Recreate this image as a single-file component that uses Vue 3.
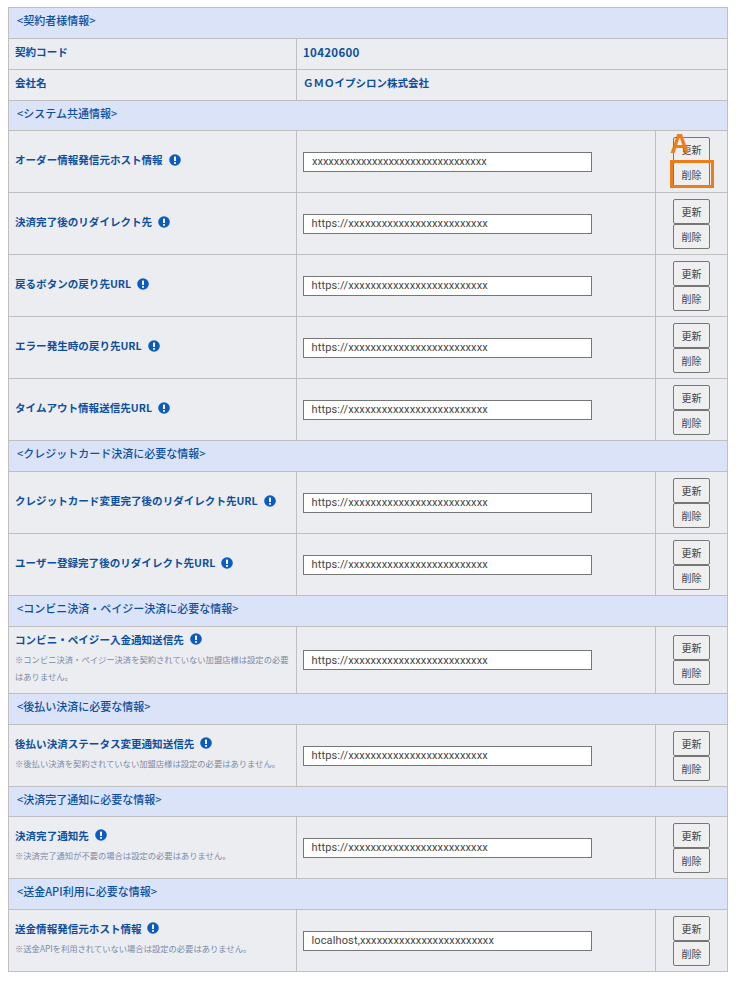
<script setup>
const url = 'https://xxxxxxxxxxxxxxxxxxxxxxxxx'
const sections = [
  { title: '<契約者様情報>', h: 31, rows: [
    { label: '契約コード', value: '10420600', h: 31 },
    { label: '会社名', value: 'ＧＭＯイプシロン株式会社', wide: true, h: 31 },
  ] },
  { title: '<システム共通情報>', h: 30, rows: [
    { label: 'オーダー情報発信元ホスト情報', input: 'xxxxxxxxxxxxxxxxxxxxxxxxxxxxxxxx', mark: true },
    { label: '決済完了後のリダイレクト先', input: url },
    { label: '戻るボタンの戻り先URL', input: url },
    { label: 'エラー発生時の戻り先URL', input: url },
    { label: 'タイムアウト情報送信先URL', input: url },
  ] },
  { title: '<クレジットカード決済に必要な情報>', h: 31, rows: [
    { label: 'クレジットカード変更完了後のリダイレクト先URL', input: url },
    { label: 'ユーザー登録完了後のリダイレクト先URL', input: url },
  ] },
  { title: '<コンビニ決済・ペイジー決済に必要な情報>', h: 31, rows: [
    { label: 'コンビニ・ペイジー入金通知送信先', input: url, h: 67, note: '※コンビニ決済・ペイジー決済を契約されていない加盟店様は設定の必要はありません。' },
  ] },
  { title: '<後払い決済に必要な情報>', h: 31, rows: [
    { label: '後払い決済ステータス変更通知送信先', input: url, note: '※後払い決済を契約されていない加盟店様は設定の必要はありません。' },
  ] },
  { title: '<決済完了通知に必要な情報>', h: 30, rows: [
    { label: '決済完了通知先', input: url, note: '※決済完了通知が不要の場合は設定の必要はありません。' },
  ] },
  { title: '<送金API利用に必要な情報>', h: 31, rows: [
    { label: '送金情報発信元ホスト情報', input: 'localhost,xxxxxxxxxxxxxxxxxxxxxxxx', note: '※送金APIを利用されていない場合は設定の必要はありません。' },
  ] },
]
</script>

<template>
  <div class="page">
    <table class="table">
      <colgroup>
        <col class="c1" />
        <col class="c2" />
        <col class="c3" />
      </colgroup>
      <tbody v-for="s in sections" :key="s.title">
        <tr :style="{ height: s.h + 'px' }">
          <th class="section" colspan="3">{{ s.title }}</th>
        </tr>
        <tr v-for="r in s.rows" :key="r.label" :class="{ short: !r.input }" :style="{ height: (r.h || 62) + 'px' }">
          <td class="label-cell">
            <div class="label">
              {{ r.label }}
              <svg v-if="r.input" class="info" viewBox="0 0 12 12" aria-hidden="true">
                <circle cx="6" cy="6" r="5.8" fill="#0b5cc0" />
                <rect x="5" y="2.4" width="2" height="4.6" rx="0.6" fill="#fff" />
                <rect x="5" y="7.9" width="2" height="1.8" rx="0.5" fill="#fff" />
              </svg>
            </div>
            <p v-if="r.note" class="note">{{ r.note }}</p>
          </td>
          <td v-if="!r.input" class="value-cell" colspan="2">
            <span class="value" :class="{ wide: r.wide }">{{ r.value }}</span>
          </td>
          <td v-if="r.input" class="value-cell">
            <input class="field" :class="{ spaced: !r.mark }" type="text" :value="r.input" />
          </td>
          <td v-if="r.input" class="btn-cell">
            <div class="btns">
              <button class="btn" type="button">更新</button>
              <button class="btn" type="button">削除</button>
              <template v-if="r.mark">
                <span class="mark-box"></span>
                <span class="mark-letter">A</span>
              </template>
            </div>
          </td>
        </tr>
      </tbody>
    </table>
  </div>
</template>

<style>
html, body { margin: 0; background: #fff; }
</style>

<style scoped>
.page {
  padding: 7px 0 10px 8px;
  width: 735px;
  box-sizing: border-box;
  font-family: "Noto Sans CJK JP", "Noto Sans", sans-serif;
}
.table {
  width: 719px;
  table-layout: fixed;
  border-collapse: collapse;
  border: 1px solid #bfbfbf;
}
.c1 { width: 288px; }
.c2 { width: 359px; }
.c3 { width: 72px; }
.section {
  background: #dae3f7;
  border: 1px solid #bfbfbf;
  padding: 0 0 6px 8px;
  text-align: left;
  font-weight: 500;
  font-size: 11px;
  line-height: 18px;
  color: #0d4f9e;
}
td {
  background: #ecedf1;
  border: 1px solid #bfbfbf;
  padding: 0;
}
.label-cell { padding: 0 6px; vertical-align: middle; }
.label {
  font-size: 10.55px;
  font-weight: 700;
  line-height: 16px;
  color: #0d4f9e;
  margin-bottom: 3px;
  white-space: nowrap;
}
.short .label { margin-bottom: 5px; }
.info {
  width: 12px;
  height: 12px;
  margin-left: 3.5px;
  vertical-align: -1.5px;
}
.note {
  margin: 0 0 4px;
  font-size: 8.3px;
  line-height: 17px;
  color: #7b8aa8;
}
.value-cell { padding: 0 6px; }
.value {
  font-size: 11.5px;
  letter-spacing: 0.3px;
  font-weight: 700;
  color: #0d4f9e;
  display: block;
  margin-bottom: 5px;
}
.value.wide { font-size: 10.5px; letter-spacing: 0; }
.field {
  display: block;
  box-sizing: border-box;
  width: 289px;
  height: 20px;
  border: 1px solid #767676;
  background: #fff;
  padding: 0 8px;
  margin: 0;
  font-family: Roboto, "Noto Sans", sans-serif;
  font-size: 11px;
  color: #444;
  outline: none;
}
.field.spaced { letter-spacing: 0.13px; padding-left: 7.5px; }
.btn-cell { padding: 0 0 0 17px; }
.btns {
  position: relative;
  width: 37px;
  display: flex;
  flex-direction: column;
}
.btn {
  box-sizing: border-box;
  width: 37px;
  height: 25px;
  padding: 0;
  margin: 0;
  border: 1px solid #767676;
  border-radius: 2px;
  background: #efefef;
  font-family: "Noto Sans CJK JP", sans-serif;
  font-size: 10px;
  color: #444;
}
.mark-box {
  position: absolute;
  left: -3px;
  top: 23px;
  width: 44px;
  height: 28px;
  box-sizing: border-box;
  border: 3px solid #ed7d16;
}
.mark-letter {
  position: absolute;
  left: -3px;
  top: -11px;
  font-family: "Liberation Sans", sans-serif;
  font-weight: 700;
  font-size: 27px;
  line-height: 36px;
  color: #ed7d16;
}
</style>
